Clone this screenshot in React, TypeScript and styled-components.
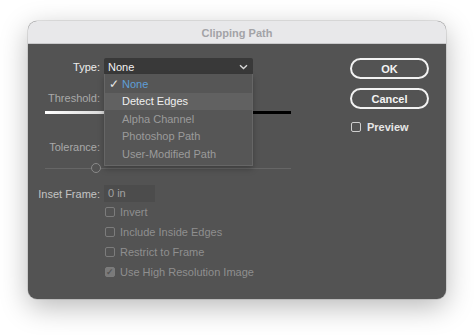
import { createGlobalStyle, styled } from "styled-components";

const GlobalStyle = createGlobalStyle`
  html, body {
    margin: 0;
    padding: 0;
    background: #ffffff;
  }
  body {
    font-family: "Liberation Sans", Arial, sans-serif;
    font-size: 11px;
  }
`;

const menuItems = [
  { label: "None", selected: true },
  { label: "Detect Edges", hover: true },
  { label: "Alpha Channel" },
  { label: "Photoshop Path" },
  { label: "User-Modified Path" },
];

const options = [
  { label: "Invert" },
  { label: "Include Inside Edges" },
  { label: "Restrict to Frame" },
  { label: "Use High Resolution Image", checked: true },
];

const App = () => {
  return (
    <>
      <GlobalStyle />
      <Page>
        <Dialog>
          <TitleBar>Clipping Path</TitleBar>
          <Body>
            <Form>
              <Row>
                <Label $tone="bright">Type:</Label>
                <SelectWrap>
                  <Select>
                    <span>None</span>
                    <Chevron />
                  </Select>
                  <Menu>
                    {menuItems.map((item) => (
                      <MenuItem key={item.label} $hover={item.hover} $selected={item.selected}>
                        <Check>{item.selected ? "✓" : ""}</Check>
                        {item.label}
                      </MenuItem>
                    ))}
                  </Menu>
                </SelectWrap>
              </Row>

              <Row $top={14}>
                <Label $tone="dim">Threshold:</Label>
              </Row>
              <GradientTrack />

              <Row $top={24}>
                <Label $tone="dim">Tolerance:</Label>
              </Row>
              <Slider>
                <Thumb style={{ left: 51 }} />
              </Slider>

              <Row $top={12}>
                <Label $tone="normal">Inset Frame:</Label>
                <Input>0 in</Input>
              </Row>

              <Options>
                {options.map((opt) => (
                  <CheckRow key={opt.label}>
                    <Box $checked={opt.checked}>{opt.checked ? "✓" : ""}</Box>
                    {opt.label}
                  </CheckRow>
                ))}
              </Options>
            </Form>

            <Side>
              <Button>OK</Button>
              <Button>Cancel</Button>
              <Preview>
                <Box $bright />
                Preview
              </Preview>
            </Side>
          </Body>
        </Dialog>
      </Page>
    </>
  );
};

export default App;

const Chevron = () => (
  <svg width="9" height="6" viewBox="0 0 9 6">
    <path d="M1 1.2 L4.5 4.5 L8 1.2" fill="none" stroke="#d8d8d8" strokeWidth="1.4" />
  </svg>
);

const Page = styled.div`
  padding: 21px 28px 36px 28px;
  width: 418px;
`;

const Dialog = styled.div`
  width: 418px;
  border-radius: 9px;
  overflow: hidden;
  background: #535353;
  box-shadow: 0 0 0 0.5px rgba(0, 0, 0, 0.18), 0 8px 28px rgba(0, 0, 0, 0.28);
`;

const TitleBar = styled.div`
  height: 23px;
  line-height: 24px;
  background: #e8e8ea;
  border-bottom: 1px solid #c9c9cb;
  box-sizing: border-box;
  text-align: center;
  font-weight: bold;
  font-size: 11px;
  color: #a3a3a7;
`;

const Body = styled.div`
  display: grid;
  grid-template-columns: 246px 79px;
  column-gap: 59px;
  padding: 14px 17px 17px 17px;
`;

const Form = styled.div`
  display: flex;
  flex-direction: column;
`;

const Row = styled.div<{ $top?: number }>`
  display: flex;
  align-items: center;
  height: 17px;
  gap: 4px;
  margin-top: ${(p) => p.$top ?? 0}px;
`;

const Label = styled.div<{ $tone: "bright" | "dim" | "normal" }>`
  width: 55px;
  flex: none;
  display: flex;
  justify-content: flex-end;
  white-space: nowrap;
  color: ${(p) => (p.$tone === "bright" ? "#ededed" : p.$tone === "dim" ? "#a9a9a9" : "#c4c4c4")};
`;

const SelectWrap = styled.div`
  position: relative;
  width: 149px;
`;

const Select = styled.div`
  height: 17px;
  box-sizing: border-box;
  background: #393939;
  border-radius: 2px;
  color: #f2f2f2;
  padding: 0 5px 0 4px;
  display: flex;
  align-items: center;
  justify-content: space-between;
`;

const Menu = styled.div`
  position: absolute;
  top: 16px;
  left: 0;
  width: 149px;
  box-sizing: border-box;
  padding: 1px 0 2px;
  background: #565656;
  border: 1px solid #666666;
  border-top: none;
  box-shadow: 0 3px 6px rgba(0, 0, 0, 0.25);
  z-index: 2;
`;

const MenuItem = styled.div<{ $hover?: boolean; $selected?: boolean }>`
  height: 17.5px;
  display: flex;
  align-items: center;
  white-space: nowrap;
  background: ${(p) => (p.$hover ? "#616161" : "transparent")};
  color: ${(p) => (p.$selected ? "#5f9fd8" : p.$hover ? "#f0f0f0" : "#9b9b9b")};
`;

const Check = styled.span`
  width: 17px;
  flex: none;
  text-align: center;
  color: #e6e6e6;
  font-size: 12px;
`;

const GradientTrack = styled.div`
  margin-top: 5px;
  height: 3px;
  background: linear-gradient(to right, #ffffff 0%, #d8d8d8 25%, #000000 85%, #000000 100%);
`;

const Slider = styled.div`
  position: relative;
  margin-top: 8px;
  height: 10px;
  &::before {
    content: "";
    position: absolute;
    left: 0;
    right: 0;
    top: 4.5px;
    height: 1px;
    background: #666666;
  }
`;

const Thumb = styled.div`
  position: absolute;
  top: 0;
  width: 10px;
  height: 10px;
  box-sizing: border-box;
  border-radius: 50%;
  border: 1.5px solid #8a8a8a;
  background: #535353;
  transform: translateX(-50%);
`;

const Input = styled.div`
  width: 51px;
  height: 17px;
  box-sizing: border-box;
  padding-left: 4px;
  line-height: 17px;
  background: #4c4c4c;
  color: #a2a2a2;
`;

const Options = styled.div`
  display: flex;
  flex-direction: column;
  margin-top: 0;
  padding-left: 60px;
`;

const CheckRow = styled.div`
  height: 20px;
  display: flex;
  align-items: center;
  gap: 5px;
  color: #8f8f8f;
  white-space: nowrap;
`;

const Box = styled.span<{ $checked?: boolean; $bright?: boolean }>`
  width: 10px;
  height: 10px;
  box-sizing: border-box;
  border: 1px solid ${(p) => (p.$bright ? "#cfcfcf" : "#7c7c7c")};
  border-radius: 2px;
  background: ${(p) => (p.$checked ? "#7a7a7a" : "transparent")};
  color: #555;
  font-size: 9px;
  line-height: 9px;
  text-align: center;
  font-weight: bold;
`;

const Side = styled.div`
  display: flex;
  flex-direction: column;
`;

const Button = styled.div`
  height: 21px;
  box-sizing: border-box;
  border: 2px solid #f2f2f2;
  border-radius: 11px;
  color: #f4f4f4;
  font-weight: bold;
  font-size: 11px;
  display: flex;
  align-items: center;
  justify-content: center;
  & + & {
    margin-top: 9px;
  }
`;

const Preview = styled.div`
  margin-top: 12px;
  display: flex;
  align-items: center;
  gap: 6px;
  color: #e6e6e6;
  font-weight: bold;
  padding-left: 1px;
`;
